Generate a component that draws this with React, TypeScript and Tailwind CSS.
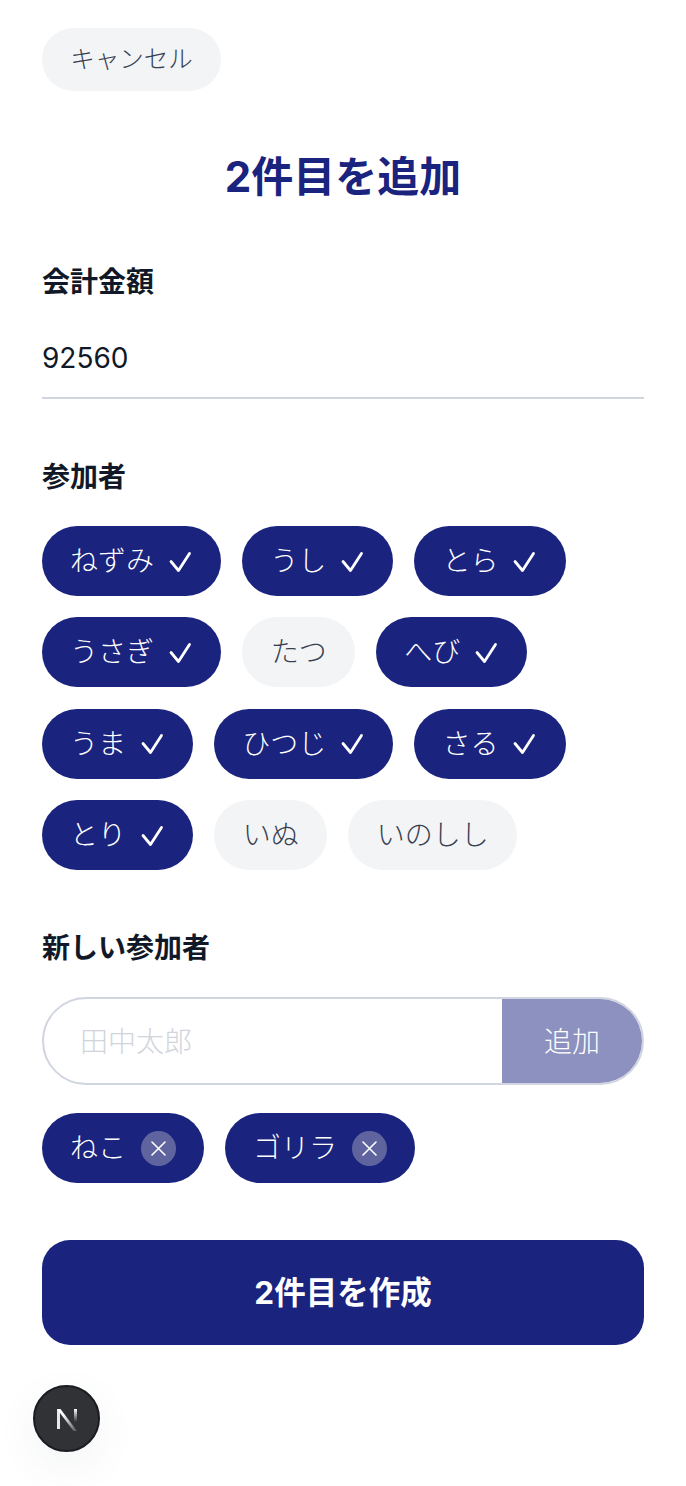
const FONT = "font-['Inter','Noto_Sans_CJK_JP',sans-serif]";

function Check() {
  return (
    <svg width="25.2" height="24" viewBox="0 0 25.2 24" fill="none" stroke="currentColor" strokeWidth="2.8" strokeLinecap="round" strokeLinejoin="round" className="ml-[14px] mt-[1px]">
      <path d="M3 11.5 L10.5 20.5 L21.5 3.5" />
    </svg>
  );
}

function Chip({ name, on }: { name: string; on: boolean }) {
  return (
    <div className={on
      ? "flex h-[70px] items-center rounded-full bg-[#1a237e] px-[28px] text-[28px] font-light leading-none text-white"
      : "flex h-[70px] items-center rounded-full bg-[#f3f4f6] px-[28.5px] text-[28px] font-light leading-none text-[#374151]"}>
      <span>{name}</span>
      {on && <Check />}
    </div>
  );
}

function Removable({ name }: { name: string }) {
  return (
    <div className="flex h-[70px] items-center rounded-full bg-[#1a237e] px-[28px] text-[28px] font-light leading-none text-white">
      <span>{name}</span>
      <span className="ml-[15px] flex h-[35px] w-[35px] items-center justify-center rounded-full bg-[#5f649f]">
        <svg width="15" height="15" viewBox="0 0 15 15" fill="none" stroke="currentColor" strokeWidth="1.6" strokeLinecap="round">
          <path d="M1 1 L14 14 M14 1 L1 14" />
        </svg>
      </span>
    </div>
  );
}

const rows: [string, boolean][] = [
  ["ねずみ", true], ["うし", true], ["とら", true],
  ["うさぎ", true], ["たつ", false], ["へび", true],
  ["うま", true], ["ひつじ", true], ["さる", true],
  ["とり", true], ["いぬ", false], ["いのしし", false],
];

export default function App() {
  return (
    <div className={`${FONT} relative h-[1486px] w-[686px] overflow-hidden bg-white px-[42px] pt-[28px]`}>
      <button className="h-[63px] w-[179px] rounded-full bg-[#f3f4f6] text-[24.5px] font-light leading-none text-[#374151]">キャンセル</button>

      <h1 className="mt-[54px] text-center text-[42px] font-bold leading-[63px] text-[#1a237e]">2件目を追加</h1>

      <div className="mt-[53px] text-[28px] font-bold leading-[42px] text-[#111827]">会計金額</div>
      <div className="mt-[14px] flex h-[82px] items-center border-b-2 border-[#d1d5e0] pt-[2px] text-[28px] leading-none text-[#111827]">92560</div>

      <div className="mt-[57px] text-[28px] font-bold leading-[42px] text-[#111827]">参加者</div>
      <div className="mt-[28px] flex flex-wrap gap-x-[21px] gap-y-[21.4px]">
        {rows.map(([n, on]) => <Chip key={n} name={n} on={on} />)}
      </div>

      <div className="mt-[56.5px] text-[28px] font-bold leading-[42px] text-[#111827]">新しい参加者</div>
      <div className="mt-[28px] flex h-[88px] overflow-hidden rounded-full border-2 border-[#d1d5e0]">
        <div className="flex flex-1 items-center pl-[36px] pt-[2px] text-[28px] font-light leading-none text-[#d1d5db]">田中太郎</div>
        <div className="flex w-[140px] items-center justify-center bg-[#8d91bf] pt-[2px] text-[28px] font-light leading-none text-white">追加</div>
      </div>
      <div className="mt-[28.5px] flex gap-[21px]">
        <Removable name="ねこ" />
        <Removable name="ゴリラ" />
      </div>

      <button className="mt-[57px] h-[105px] w-full rounded-[28px] bg-[#1a237e] text-[31.5px] font-bold leading-none text-white">2件目を作成</button>

      <div className="absolute left-[33px] top-[1385px] flex h-[67px] w-[67px] items-center justify-center rounded-full border-2 border-[#1b1c22] bg-[#303236] shadow-[0_14px_42px_rgba(90,100,130,0.07)]">
        <svg width="26" height="26" viewBox="0 0 26 26">
          <defs>
            <linearGradient id="nd" x1="0" y1="0" x2="1" y2="1">
              <stop offset="0.3" stopColor="#ffffff" />
              <stop offset="1" stopColor="#ffffff" stopOpacity="0.15" />
            </linearGradient>
            <linearGradient id="nr" x1="0" y1="0" x2="0" y2="1">
              <stop offset="0" stopColor="#ffffff" />
              <stop offset="1" stopColor="#ffffff" stopOpacity="0" />
            </linearGradient>
          </defs>
          <path d="M3 3 H6 V23 H3 Z" fill="#e8e9ec" />
          <path d="M3 3 H6.5 L23 25 H19.5 Z" fill="url(#nd)" />
          <rect x="20" y="3" width="3" height="13" fill="url(#nr)" />
        </svg>
      </div>
    </div>
  );
}
